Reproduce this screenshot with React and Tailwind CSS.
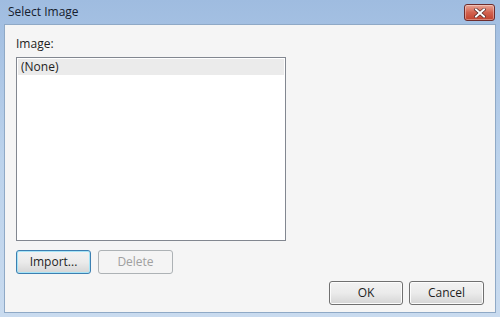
export default function App() {
  const font = { fontFamily: '"Open Sans", "Noto Sans", Arial, sans-serif' };
  return (
    <div className="w-[500px] h-[317px] bg-gradient-to-b from-[#9fbce0] via-[#bcd3ec] to-[#c9dbef] flex flex-col text-[12px] text-[#1e1e1e]" style={font}>
      <div className="h-[24px] flex items-start justify-between pl-[8px] pr-[5px]">
        <div className="pt-[4px] text-[12px] leading-[16px] text-[#16202e]">Select Image</div>
        <div className="mt-[4px] w-[31px] h-[17px] rounded-[3px] border border-[#6e2c2c] bg-gradient-to-b from-[#e8a496] via-[#d2624f] to-[#c0412d] flex items-center justify-center shadow-[inset_0_0_0_1px_rgba(255,255,255,0.35)]">
          <svg width="12" height="10" viewBox="0 0 12 10">
            <path d="M2 1.5 L10 8.5 M10 1.5 L2 8.5" stroke="#4a2020" strokeWidth="3.2" strokeLinecap="square" />
            <path d="M2 1.5 L10 8.5 M10 1.5 L2 8.5" stroke="#ffffff" strokeWidth="2" strokeLinecap="square" />
          </svg>
        </div>
      </div>
      <div className="mx-[4px] mb-[4px] flex-1 bg-[#f5f5f5] border border-[#8fa9c6] flex flex-col px-[11px] pt-[11px] pb-[7px]">
        <div className="leading-[16px] mb-[5px]">Image:</div>
        <div className="w-[270px] h-[184px] border border-[#828790] bg-white p-[1px]">
          <div className="h-[16px] bg-[#ebebeb] pl-[3px] leading-[16px]">(None)</div>
        </div>
        <div className="flex gap-[7px] mt-[9px]">
          <button className="w-[75px] h-[24px] rounded-[3px] border border-[#3c7fb1] bg-gradient-to-b from-[#f2f2f2] via-[#ebebeb] to-[#d5d5d5] shadow-[inset_0_0_0_1px_#a6e4f7] leading-[20px]">Import...</button>
          <button className="w-[75px] h-[24px] rounded-[3px] border border-[#adb2b5] bg-[#f4f4f4] text-[#a0a0a0] leading-[20px]">Delete</button>
        </div>
        <div className="flex justify-end gap-[6px] mt-[7px]">
          <button className="w-[74px] h-[24px] rounded-[3px] border border-[#707070] bg-gradient-to-b from-[#f2f2f2] via-[#ebebeb] to-[#d5d5d5] shadow-[inset_0_0_0_1px_#fcfcfc] leading-[20px]">OK</button>
          <button className="w-[75px] h-[24px] rounded-[3px] border border-[#707070] bg-gradient-to-b from-[#f2f2f2] via-[#ebebeb] to-[#d5d5d5] shadow-[inset_0_0_0_1px_#fcfcfc] leading-[20px]">Cancel</button>
        </div>
      </div>
    </div>
  );
}
